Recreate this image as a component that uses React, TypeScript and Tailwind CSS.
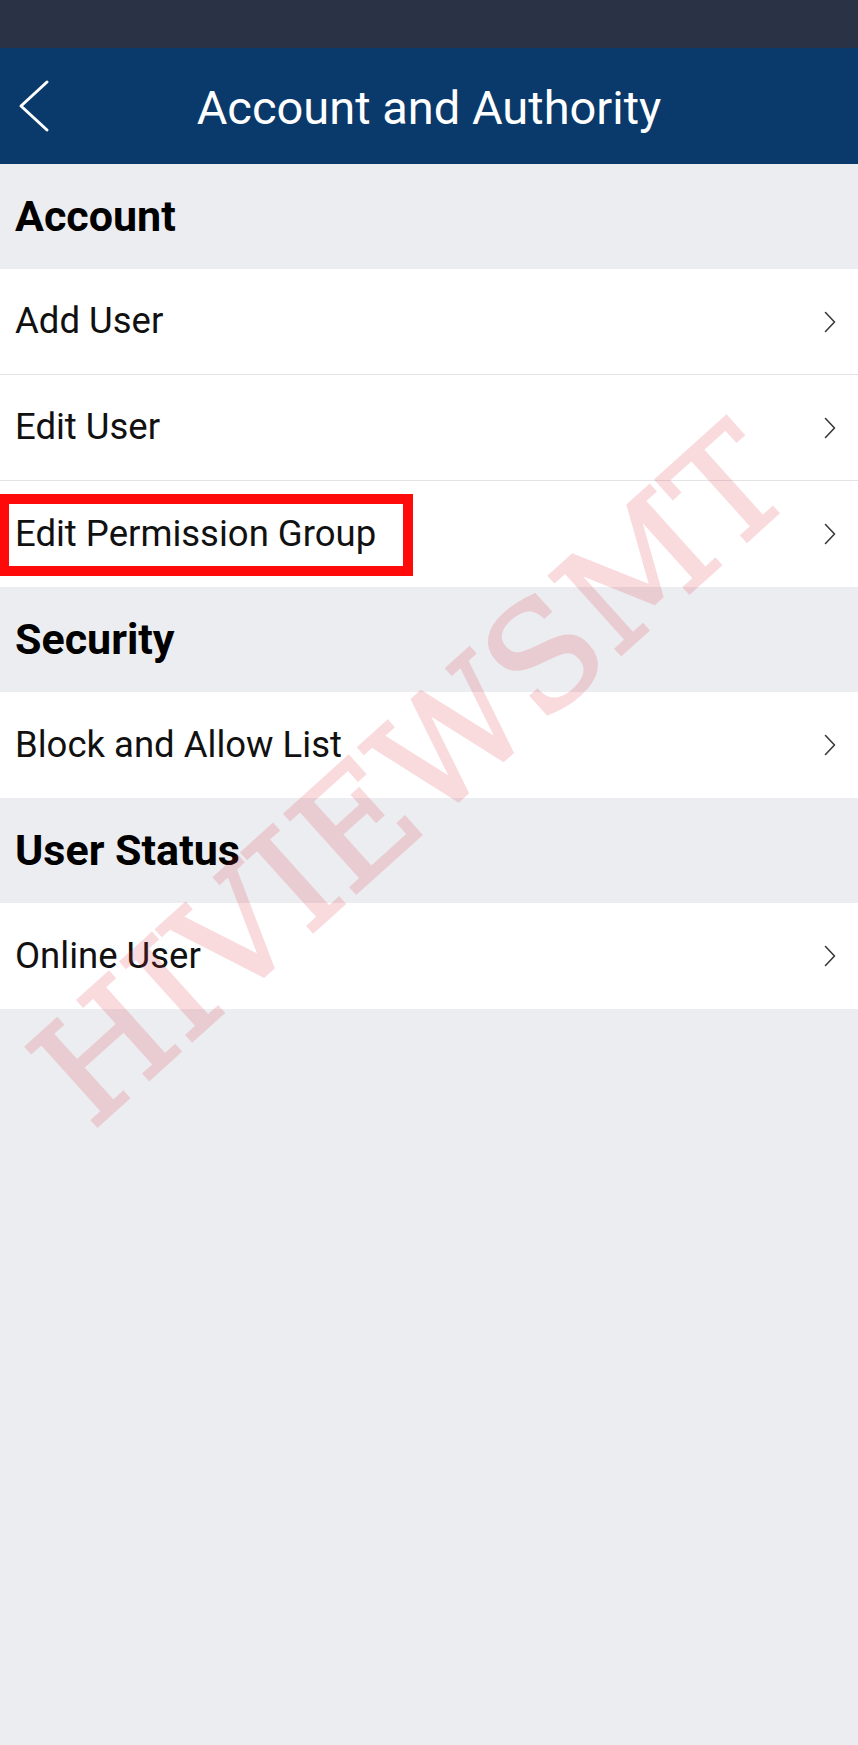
import React from "react"

const Chevron = () => (
	<svg width="12" height="22" viewBox="0 0 12 22" className="shrink-0 mr-[22px]">
		<path d="M1.5 1.5 L10.5 11 L1.5 20.5" fill="none" stroke="#3a3a3a" strokeWidth="1.6" strokeLinecap="round" strokeLinejoin="round" />
	</svg>
)

const SectionTitle = ({ title }: { title: string }) => (
	<div className="h-[105px] flex items-center pl-[15px] bg-[#ecedf0]">
		<p className="text-[43px] leading-none font-bold text-black">{title}</p>
	</div>
)

const Item = (props: { label: string; divider?: boolean; marked?: boolean }) => {
	const { label, divider, marked } = props
	return (
		<div
			className={`relative h-[106px] flex items-center justify-between bg-white pl-[15px] ${
				divider ? "border-b border-[#e3e3e6]" : ""
			}`}
		>
			<p className="text-[36.5px] leading-none text-[#111]">{label}</p>
			<Chevron />
			{marked && (
				<div className="absolute left-[-1px] top-[13px] w-[414px] h-[82px] border-[10px] border-[#ff0a0a]" />
			)}
		</div>
	)
}

const App = () => {
	return (
		<div
			className="relative w-[858px] min-h-[1745px] bg-[#ecedf0] overflow-hidden"
			style={{ fontFamily: "Roboto, 'Noto Sans', sans-serif" }}
		>
			<div className="h-[48px] bg-[#2a3345]" />
			<div className="h-[116px] bg-[#0a3a6b] grid grid-cols-[64px_1fr_64px] items-center">
				<svg width="32" height="54" viewBox="0 0 32 54" className="ml-[18px]">
					<path d="M29 3 L3 27 L29 51" fill="none" stroke="#ffffff" strokeWidth="3" strokeLinecap="round" strokeLinejoin="round" />
				</svg>
				<p className="text-center text-white text-[47px] leading-none pt-[2px]">Account and Authority</p>
				<div />
			</div>

			<SectionTitle title="Account" />
			<Item label="Add User" divider />
			<Item label="Edit User" divider />
			<Item label="Edit Permission Group" marked />

			<SectionTitle title="Security" />
			<Item label="Block and Allow List" />

			<SectionTitle title="User Status" />
			<Item label="Online User" />

			{/* watermark */}
			<div
				className="pointer-events-none absolute left-[411px] top-[775px] -translate-x-1/2 -translate-y-1/2 -rotate-[42deg] whitespace-nowrap text-[146px] leading-none text-[#de3040] opacity-[0.17] [-webkit-text-stroke:3px_#de3040]"
				style={{ fontFamily: "'DejaVu Serif', serif" }}
			>
				HIVIEWSMT
			</div>
		</div>
	)
}

export default App
